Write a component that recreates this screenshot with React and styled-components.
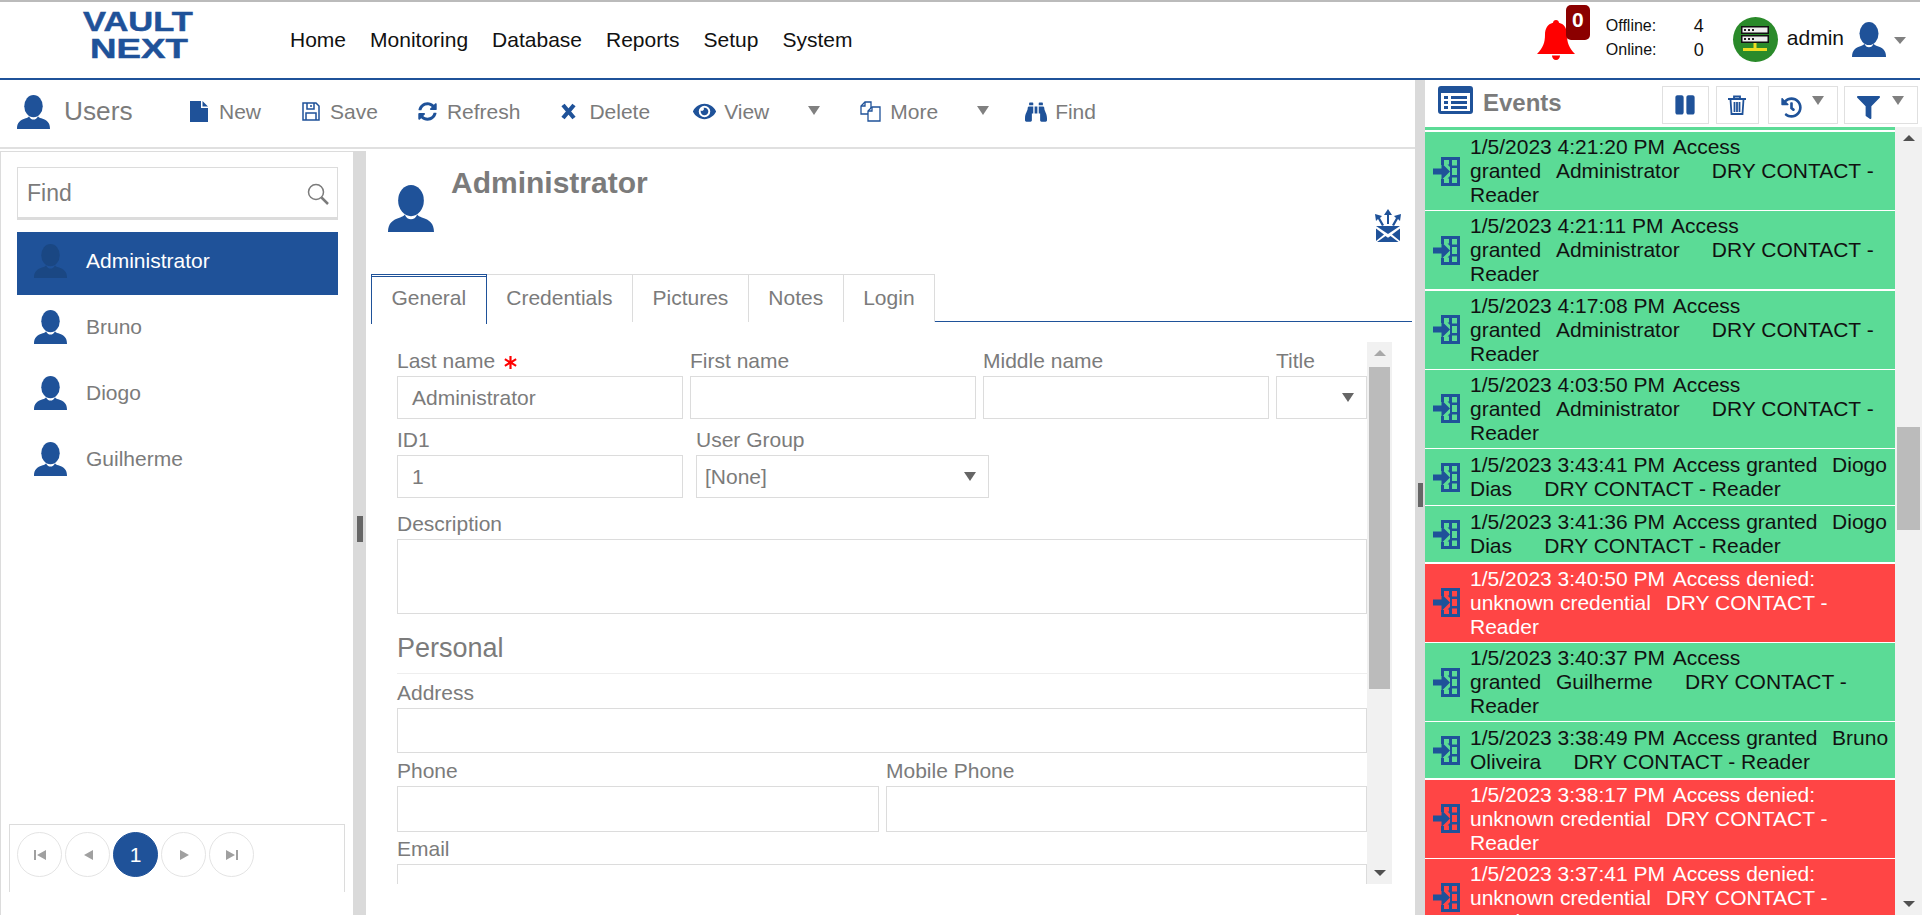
import React from 'react';
import styled, { createGlobalStyle } from 'styled-components';
import { FaSyncAlt, FaEye, FaBinoculars, FaPause, FaHistory, FaFilter } from 'react-icons/fa';

const BLUE = '#1f5299';
const GRAY = '#7b7b7b';
const LINE = '#dcdcdc';
const NB = '\u00a0';

const GlobalStyle = createGlobalStyle`
  html, body { margin: 0; padding: 0; height: 100%; overflow: hidden; background: #fff; }
  body { font-family: "Liberation Sans", Arial, sans-serif; font-size: 21px; color: ${GRAY}; }
  * { box-sizing: border-box; }
`;

const Page = styled.div`
  width: 1922px;
  height: 915px;
  display: flex;
  flex-direction: column;
  overflow: hidden;
`;

const Header = styled.header`
  width: 1920px;
  height: 80px;
  flex: none;
  display: flex;
  align-items: stretch;
  border-top: 2px solid #bbb;
  border-bottom: 2px solid ${BLUE};
  background: #fff;
`;

const Logo = styled.div`
  width: 290px;
  flex: none;
  padding: 6px 0 0 83px;
  color: ${BLUE};
  font-weight: 700;
  font-size: 28px;
  line-height: 27px;
  -webkit-text-stroke: 0.5px ${BLUE};
`;

const LogoLine = styled.div`
  transform-origin: left center;
  white-space: nowrap;
  transform: scaleX(${(p) => p.$scale});
  margin-left: ${(p) => p.$indent || 0}px;
`;

const Nav = styled.nav`
  display: flex;
  gap: 24px;
  align-items: center;
  padding-bottom: 1px;
  color: #111;
`;

const Status = styled.div`
  margin-left: auto;
  display: flex;
  align-items: center;
  height: 100%;
  position: relative;
`;

const Bell = styled.div`
  position: relative;
  width: 53px;
  height: 76px;
  margin-right: 16px;
`;

const BellIcon = styled.svg`
  position: absolute;
  left: 0;
  top: 18px;
`;

const BellBadge = styled.span`
  position: absolute;
  left: 29px;
  top: 3px;
  width: 24px;
  height: 35px;
  border-radius: 5px;
  background: #8b0000;
  color: #fff;
  font-weight: 700;
  text-align: center;
  line-height: 30px;
`;

const Counts = styled.div`
  display: grid;
  grid-template-columns: 88px 30px;
  row-gap: 6px;
  align-items: center;
  font-size: 16px;
  line-height: 18px;
  color: #111;
  margin-right: 9px;
  margin-top: -5px;
`;

const CountValue = styled.span`
  font-size: 18px;
`;

const Server = styled.div`
  width: 45px;
  height: 45px;
  border-radius: 50%;
  background: #2a8a2a;
  margin-top: -1px;
  display: flex;
  align-items: center;
  justify-content: center;
`;

const UserName = styled.span`
  color: #111;
  margin: 0 8px 4px 9px;
`;

const Caret = styled.span`
  display: inline-block;
  width: 0;
  height: 0;
  border-left: 6.5px solid transparent;
  border-right: 6.5px solid transparent;
  border-top: 9px solid ${(p) => p.$color || '#808080'};
`;

const HeaderCaret = styled(Caret)`
  margin: 0 14px 0 8px;
  border-top-width: 7px;
`;

const Body = styled.div`
  flex: 1;
  min-height: 0;
  display: flex;
`;

const Main = styled.div`
  width: 1415px;
  flex: none;
  display: flex;
  flex-direction: column;
`;

const Toolbar = styled.div`
  height: 69px;
  flex: none;
  display: flex;
  align-items: center;
  border-bottom: 2px solid #e0e0e0;
  padding: 0 0 4px 17px;
`;

const ToolTitle = styled.div`
  display: flex;
  align-items: center;
  width: 173px;
  font-size: 26.25px;
  gap: 14px;
  flex: none;
  padding-top: 1px;
`;

const ToolButton = styled.div`
  display: flex;
  align-items: center;
  gap: ${(p) => p.$gap ?? 11}px;
  margin-right: ${(p) => p.$after}px;
  color: ${GRAY};
  svg { color: ${BLUE}; flex: none; }
`;

const ToolCaret = styled(Caret)`
  margin-right: ${(p) => p.$after}px;
  margin-bottom: 2px;
`;

const Split = styled.div`
  flex: 1;
  min-height: 0;
  display: flex;
  padding-top: 2px;
`;

const LeftPanel = styled.aside`
  width: 353px;
  flex: none;
  border-left: 1px solid ${LINE};
  border-top: 1px solid ${LINE};
  padding: 15px 15px 0 16px;
  display: flex;
  flex-direction: column;
`;

const Search = styled.div`
  height: 53px;
  flex: none;
  border: 1px solid ${LINE};
  border-bottom-width: 3px;
  padding: 2px 8px 0 9px;
  display: flex;
  align-items: center;
  justify-content: space-between;
  margin-bottom: 12px;
  font-size: 23px;
`;

const UserRow = styled.div`
  height: ${(p) => (p.$active ? 63 : 66)}px;
  flex: none;
  display: flex;
  align-items: center;
  gap: 19px;
  padding: 0 0 ${(p) => (p.$active ? 5 : 2)}px 17px;
  background: ${(p) => (p.$active ? BLUE : 'transparent')};
  color: ${(p) => (p.$active ? '#fff' : GRAY)};
  svg { color: ${(p) => (p.$active ? '#1a4783' : BLUE)}; }
`;

const Pager = styled.div`
  margin: auto 0 23px -8px;
  width: 336px;
  height: 68px;
  flex: none;
  border: 1px solid ${LINE};
  border-bottom: none;
  padding: 7px 0 0 7px;
  display: flex;
  gap: 3px;
`;

const PageDot = styled.div`
  width: 45px;
  height: 45px;
  border-radius: 50%;
  border: 1px solid ${(p) => (p.$active ? BLUE : '#e4e4e4')};
  background: ${(p) => (p.$active ? BLUE : '#fff')};
  color: #fff;
  display: flex;
  align-items: center;
  justify-content: center;
  svg { color: #a0a0a0; }
`;

const Gutter = styled.div`
  flex: none;
  width: ${(p) => p.$width}px;
  background: #dadada;
  display: flex;
  align-items: flex-start;
  justify-content: center;
  padding-top: ${(p) => p.$handleTop}px;
`;

const Handle = styled.span`
  width: ${(p) => p.$width}px;
  height: ${(p) => p.$height}px;
  background: #666;
`;

const Center = styled.section`
  flex: 1;
  min-width: 0;
  display: flex;
  flex-direction: column;
  padding-left: 5px;
  position: relative;
`;

const Heading = styled.div`
  height: 123px;
  flex: none;
  padding: 15px 0 0 17px;
  display: flex;
  align-items: flex-start;
  gap: 17px;
  position: relative;
`;

const HeadIcon = styled.div`
  margin-top: 19px;
`;

const HeadName = styled.h2`
  margin: 0;
  font-size: 30px;
  line-height: 34px;
  font-weight: 700;
  color: ${GRAY};
`;

const Broadcast = styled.div`
  position: absolute;
  right: 13px;
  top: 58px;
  color: ${BLUE};
`;

const Tabs = styled.div`
  height: 48px;
  flex: none;
  display: flex;
  border-bottom: 1.5px solid ${BLUE};
  margin-right: 3px;
`;

const Tab = styled.div`
  padding: 1px 19.5px 0;
  height: ${(p) => (p.$active ? 49.5 : 48)}px;
  line-height: 44px;
  background: #fff;
  border-top: 1px solid ${(p) => (p.$active ? BLUE : LINE)};
  border-right: 1px solid ${(p) => (p.$active ? BLUE : LINE)};
  border-left: ${(p) => (p.$active ? `1px solid ${BLUE}` : 'none')};
  box-shadow: ${(p) => (p.$active ? `inset 0 1px 0 #fff, inset 0 2px 0 ${BLUE}` : 'none')};
`;

const FormWrap = styled.div`
  height: 542px;
  flex: none;
  margin-top: 20px;
  display: flex;
  overflow: hidden;
`;

const Form = styled.div`
  width: 996px;
  flex: none;
  padding: 5px 0 0 26px;
  overflow: hidden;
`;

const Row = styled.div`
  display: flex;
  gap: ${(p) => p.$gap ?? 7}px;
  margin-bottom: ${(p) => p.$mb ?? 7}px;
`;

const Field = styled.div`
  width: ${(p) => p.$w}px;
  flex: none;
`;

const Label = styled.div`
  height: 29px;
  margin-top: ${(p) => p.$mt ?? 0}px;
  line-height: 27px;
  display: flex;
  align-items: flex-start;
  gap: 9px;
`;

const Input = styled.div`
  height: ${(p) => p.$h || 43}px;
  border: 1.5px solid ${LINE};
  padding: 0 14px;
  display: flex;
  align-items: center;
  justify-content: space-between;
  line-height: 1;
`;

const SelectBox = styled(Input)`
  padding: 0 12px 0 8px;
`;

const Section = styled.div`
  font-size: 27px;
  line-height: 30px;
  height: 46px;
  padding-top: 5px;
  margin: 14px 0 3px;
  border-bottom: 1px solid #eee;
`;

const Required = styled.svg`
  width: 13px;
  height: 13px;
  margin-top: 9px;
  color: #f00;
`;

const Scrollbar = styled.div`
  width: ${(p) => p.$width}px;
  flex: none;
  background: #f1f1f1;
  display: flex;
  flex-direction: column;
  align-items: center;
  position: relative;
`;

const ScrollEnd = styled.span`
  position: absolute;
  ${(p) => (p.$down ? 'bottom: 8px;' : 'top: 8px;')}
  width: 0;
  height: 0;
  border-left: 6px solid transparent;
  border-right: 6px solid transparent;
  ${(p) => (p.$down ? `border-top: 6px solid ${p.$color};` : `border-bottom: 6px solid ${p.$color};`)}
`;

const Thumb = styled.span`
  position: absolute;
  top: ${(p) => p.$top}px;
  height: ${(p) => p.$height}px;
  left: 2px;
  right: 2px;
  background: #bbb;
`;

const Events = styled.aside`
  flex: 1;
  min-width: 0;
  display: flex;
  flex-direction: column;
  background: #fff;
`;

const EventsHead = styled.div`
  height: 47px;
  flex: none;
  display: flex;
  align-items: flex-start;
  padding: 6px 4.5px 0 13px;
`;

const EventsTitle = styled.div`
  font-size: 24px;
  line-height: 28px;
  font-weight: 700;
  margin: 3px auto 0 10px;
  color: ${GRAY};
`;

const IconButton = styled.div`
  width: ${(p) => p.$w}px;
  height: 38px;
  margin-left: ${(p) => p.$ml ?? 7}px;
  border: 1.5px solid #e0e0e0;
  color: ${BLUE};
  display: flex;
  align-items: center;
  justify-content: center;
  gap: ${(p) => p.$gap ?? 10}px;
`;

const LowIcon = styled.span`
  display: flex;
  margin-top: 5px;
`;

const RaisedCaret = styled(Caret)`
  margin-bottom: 9px;
`;

const EventsBody = styled.div`
  flex: 1;
  min-height: 0;
  display: flex;
  overflow: hidden;
`;

const EventList = styled.div`
  flex: 1;
  min-width: 0;
  overflow: hidden;
`;

const TopStrip = styled.div`
  height: 3px;
  background: #5bdb96;
  margin-bottom: 2px;
`;

const EventRow = styled.div`
  min-height: 56px;
  margin-bottom: 1.3px;
  padding: 3px 4px 3px 8px;
  display: flex;
  align-items: center;
  gap: 10px;
  line-height: 24px;
  background: ${(p) => (p.$denied ? '#ff4545' : '#5bdb96')};
  color: ${(p) => (p.$denied ? '#fff' : '#111')};
`;

const EventIconWrap = styled.div`
  flex: none;
  width: 27px;
  height: 29px;
  color: ${BLUE};
`;

const EventText = styled.div`
  flex: 1;
  min-width: 0;
`;

const Pad = styled.span`
  padding-right: 3px;
`;

const Person = ({ size = 34, color = 'currentColor' }) => (
  <svg width={size} height={size * 1.03} viewBox="0 0 34 35" fill={color}>
    <ellipse cx="17" cy="11.500" rx="9.500" ry="11.500" />
    <path d="M0 35C0 28.500 3 25.800 9 24c1.700-.6 2.700-1.200 3.400-2.200C13.500 24.300 15 25.300 17 25.300s3.500-1 4.600-3.500c.7 1 1.700 1.600 3.400 2.200 6 1.800 9 4.500 9 11z" />
  </svg>
);

const EventIcon = () => (
  <EventIconWrap>
    <svg width="27" height="29" viewBox="0 0 27 29" fill="currentColor">
      <path fillRule="evenodd" d="M8 0h19v29H8v-7h3v4h5v-4.500h-1.500l2.500-2.500v-9l-2.500-2.500H16V3h-5v5H8V0zm11 3v5.500h5V3h-5zm0 8v7h5v-7h-5zm0 9.500V26h5v-5.500h-5z" />
      <path d="M0 11.500h8.500V6l8.500 8.500-8.500 8.500v-5.500H0z" />
    </svg>
  </EventIconWrap>
);

const TriangleIcon = ({ d }) => (
  <svg width="16" height="16" viewBox="0 0 16 16" fill="currentColor">
    <path d={d} />
  </svg>
);

const eventsData = [
  ['1/5/2023 4:21:20 PM', 'Access granted', 'Administrator'],
  ['1/5/2023 4:21:11 PM', 'Access granted', 'Administrator'],
  ['1/5/2023 4:17:08 PM', 'Access granted', 'Administrator'],
  ['1/5/2023 4:03:50 PM', 'Access granted', 'Administrator'],
  ['1/5/2023 3:43:41 PM', 'Access granted', 'Diogo Dias'],
  ['1/5/2023 3:41:36 PM', 'Access granted', 'Diogo Dias'],
  ['1/5/2023 3:40:50 PM', 'Access denied: unknown credential', ''],
  ['1/5/2023 3:40:37 PM', 'Access granted', 'Guilherme'],
  ['1/5/2023 3:38:49 PM', 'Access granted', 'Bruno Oliveira'],
  ['1/5/2023 3:38:17 PM', 'Access denied: unknown credential', ''],
  ['1/5/2023 3:37:41 PM', 'Access denied: unknown credential', ''],
];

const users = ['Administrator', 'Bruno', 'Diogo', 'Guilherme'];

function ToolbarItems() {
  return (
    <>
      <ToolButton $after={41}>
        <svg width="18" height="21" viewBox="0 0 18 21" fill="currentColor">
          <path d="M0 0h11v7h7v14H0zM12.500 0L18 5.500h-5.500z" />
        </svg>
        New
      </ToolButton>
      <ToolButton $after={40} $gap={10}>
        <svg width="18" height="19" viewBox="0 0 18 19" fill="none" stroke="currentColor" strokeWidth="1.500">
          <path d="M1 1h13l3 3v14H1z" />
          <path d="M5 1v6h7V1M9 3v2M4 18v-7h10v7" />
        </svg>
        Save
      </ToolButton>
      <ToolButton $after={41} $gap={10}><FaSyncAlt size={19} />Refresh</ToolButton>
      <ToolButton $after={43} $gap={13}>
        <svg width="15" height="17" viewBox="0 0 15 17" fill="none" stroke="currentColor" strokeWidth="4.200">
          <path d="M2 2l11 13M13 2L2 15" />
        </svg>
        Delete
      </ToolButton>
      <ToolButton $after={39} $gap={8}><FaEye size={23} />View</ToolButton>
      <ToolCaret $after={40} />
      <ToolButton $after={39} $gap={9}>
        <svg width="21" height="21" viewBox="0 0 21 21" fill="#fff" stroke="currentColor" strokeWidth="1.300">
          <path d="M1 13V5l4-4h6v12z" />
          <path d="M8 20V10l4-4h8v14z" />
          <path d="M12 6v4H8M5 1v4H1" fill="none" />
        </svg>
        More
      </ToolButton>
      <ToolCaret $after={36} />
      <ToolButton $after={0} $gap={8}><FaBinoculars size={22} />Find</ToolButton>
    </>
  );
}

export default function App() {
  return (
    <Page>
      <GlobalStyle />
      <Header>
        <Logo>
          <LogoLine $scale={1.23}>VAULT</LogoLine>
          <LogoLine $scale={1.31} $indent={7}>NEXT</LogoLine>
        </Logo>
        <Nav>
          <span>Home</span>
          <span>Monitoring</span>
          <span>Database</span>
          <span>Reports</span>
          <span>Setup</span>
          <span>System</span>
        </Nav>
        <Status>
          <Bell>
            <BellIcon width="38" height="40" viewBox="0 0 38 40" fill="#f00">
              <path d="M19 0c1.700 0 3 1.200 3 2.800 5.500 1.300 8 6 8 12 0 8 2 13 8 19.200H0c6-6.200 8-11.200 8-19.200 0-6 2.500-10.700 8-12C16 1.200 17.300 0 19 0z" />
              <path d="M15 35.500h8c0 2.500-1.800 4.500-4 4.500s-4-2-4-4.500z" />
            </BellIcon>
            <BellBadge>0</BellBadge>
          </Bell>
          <Counts>
            <span>Offline:</span><CountValue>4</CountValue>
            <span>Online:</span><CountValue>0</CountValue>
          </Counts>
          <Server>
            <svg width="28" height="27" viewBox="0 0 28 27">
              <rect x="0" y="0" width="28" height="8" fill="#111" />
              <rect x="0" y="9" width="28" height="8" fill="#111" />
              <rect x="1.500" y="1.500" width="25" height="5" fill="#eee" />
              <rect x="1.500" y="10.500" width="25" height="5" fill="#eee" />
              <path d="M3 3h2v2H3zM7 3h2v2H7zM11 3h2v2h-2zM3 12h2v2H3zM7 12h2v2H7zM11 12h2v2h-2z" fill="#222" />
              <path d="M12.500 17h3v5H26v3H2v-3h10.500z" fill="#eedd22" />
            </svg>
          </Server>
          <UserName>admin</UserName>
          <Person size={34} color={BLUE} />
          <HeaderCaret />
        </Status>
      </Header>
      <Body>
        <Main>
          <Toolbar>
            <ToolTitle><Person size={33} color={BLUE} />Users</ToolTitle>
            <ToolbarItems />
          </Toolbar>
          <Split>
            <LeftPanel>
              <Search>
                Find
                <svg width="22" height="22" viewBox="0 0 22 22" fill="none" stroke="#7b7b7b" strokeWidth="1.500">
                  <circle cx="9" cy="9" r="7.500" />
                  <path d="M14.500 14.500L21 21" strokeWidth="2.500" />
                </svg>
              </Search>
              {users.map((name, i) => (
                <UserRow key={name} $active={i === 0}>
                  <Person size={33} />
                  {name}
                </UserRow>
              ))}
              <Pager>
                <PageDot><TriangleIcon d="M2 3h2v10H2zM14 3v10L5 8z" /></PageDot>
                <PageDot><TriangleIcon d="M13 3v10L4 8z" /></PageDot>
                <PageDot $active>1</PageDot>
                <PageDot><TriangleIcon d="M4 3v10l9-5z" /></PageDot>
                <PageDot><TriangleIcon d="M2 3v10l9-5zM12 3h2v10h-2z" /></PageDot>
              </Pager>
            </LeftPanel>
            <Gutter $width={13} $handleTop={365}><Handle $width={6} $height={26} /></Gutter>
            <Center>
              <Heading>
                <HeadIcon><Person size={46} color={BLUE} /></HeadIcon>
                <HeadName>Administrator</HeadName>
                <Broadcast>
                  <svg width="28" height="33" viewBox="0 0 28 33" fill="currentColor">
                    <path d="M14 0l4 6h-3v9h-2V6h-3zM1 5l7 2-2 2 4 7-2 1-4-7-2 2zM27 5l-1 7-2-2-4 7-2-1 4-7-2-2z" />
                    <path d="M2 17h24L14 25zM2 19.500l8 6-8 6.500zM26 19.500V32l-8-6.500zM11.500 27l2.500 1.800 2.500-1.800 8 6H3z" />
                  </svg>
                </Broadcast>
              </Heading>
              <Tabs>
                <Tab $active>General</Tab>
                <Tab>Credentials</Tab>
                <Tab>Pictures</Tab>
                <Tab>Notes</Tab>
                <Tab>Login</Tab>
              </Tabs>
              <FormWrap>
                <Form>
                  <Row>
                    <Field $w={286}>
                      <Label>
                        Last name
                        <Required viewBox="0 0 12 12" fill="currentColor">
                          <path d="M5 0h2v4.300L10.700 2l1 1.700L8 6l3.700 2.300-1 1.700L7 7.700V12H5V7.700L1.300 10l-1-1.700L4 6 .3 3.700l1-1.700L5 4.300z" />
                        </Required>
                      </Label>
                      <Input>Administrator</Input>
                    </Field>
                    <Field $w={286}><Label>First name</Label><Input /></Field>
                    <Field $w={286}><Label>Middle name</Label><Input /></Field>
                    <Field $w={91}><Label>Title</Label><SelectBox><span /><Caret $color="#666" /></SelectBox></Field>
                  </Row>
                  <Row $gap={13} $mb={12}>
                    <Field $w={286}><Label>ID1</Label><Input>1</Input></Field>
                    <Field $w={293}><Label>User Group</Label><SelectBox>[None]<Caret $color="#666" /></SelectBox></Field>
                  </Row>
                  <Label>Description</Label>
                  <Input $h={75} />
                  <Section>Personal</Section>
                  <Label $mt={5}>Address</Label>
                  <Input $h={45} />
                  <Row $gap={7} $mb={3}>
                    <Field $w={482}><Label $mt={4}>Phone</Label><Input $h={46} /></Field>
                    <Field $w={481}><Label $mt={4}>Mobile Phone</Label><Input $h={46} /></Field>
                  </Row>
                  <Label>Email</Label>
                  <Input $h={45} />
                </Form>
                <Scrollbar $width={25}>
                  <ScrollEnd $color="#a8a8a8" />
                  <Thumb $top={25} $height={322} />
                  <ScrollEnd $down $color="#505050" />
                </Scrollbar>
              </FormWrap>
            </Center>
          </Split>
        </Main>
        <Gutter $width={10} $handleTop={403}><Handle $width={5} $height={24} /></Gutter>
        <Events>
          <EventsHead>
            <svg width="35" height="28" viewBox="0 0 35 28" fill={BLUE}>
              <path fillRule="evenodd" d="M3 0h29a3 3 0 013 3v22a3 3 0 01-3 3H3a3 3 0 01-3-3V3a3 3 0 013-3zm0 7v18h29V7H3zm3 3h4v3H6zm7 0h16v3H13zM6 15h4v3H6zm7 0h16v3H13zM6 20h4v3H6zm7 0h16v3H13z" />
            </svg>
            <EventsTitle>Events</EventsTitle>
            <IconButton $w={47}><FaPause size={22} /></IconButton>
            <IconButton $w={43} $ml={7}>
              <svg width="18" height="20" viewBox="0 0 18 20" fill="none" stroke="currentColor" strokeWidth="1.800">
                <path d="M0 4h18M6 4V1.500h6V4" />
                <path d="M2.500 4.500l1 14.500h11l1-14.500M6.500 7v10M9 7v10M11.500 7v10" />
              </svg>
            </IconButton>
            <IconButton $w={70} $ml={9}><LowIcon><FaHistory size={21} /></LowIcon><RaisedCaret /></IconButton>
            <IconButton $w={74} $ml={6} $gap={12}><LowIcon><FaFilter size={23} /></LowIcon><RaisedCaret /></IconButton>
          </EventsHead>
          <EventsBody>
            <EventList>
              <TopStrip />
              {eventsData.map(([when, action, name]) => (
                <EventRow key={when} $denied={!name}>
                  <EventIcon />
                  <EventText>
                    <Pad>{when}</Pad>{' '}
                    <Pad>{action}{NB}{NB}</Pad>
                    {name && <Pad>{name}{NB}{NB}{NB}{NB}{NB}</Pad>}
                    DRY CONTACT - Reader
                  </EventText>
                </EventRow>
              ))}
            </EventList>
            <Scrollbar $width={27}>
              <ScrollEnd $color="#505050" />
              <Thumb $top={300} $height={103} />
              <ScrollEnd $down $color="#505050" />
            </Scrollbar>
          </EventsBody>
        </Events>
      </Body>
    </Page>
  );
}
